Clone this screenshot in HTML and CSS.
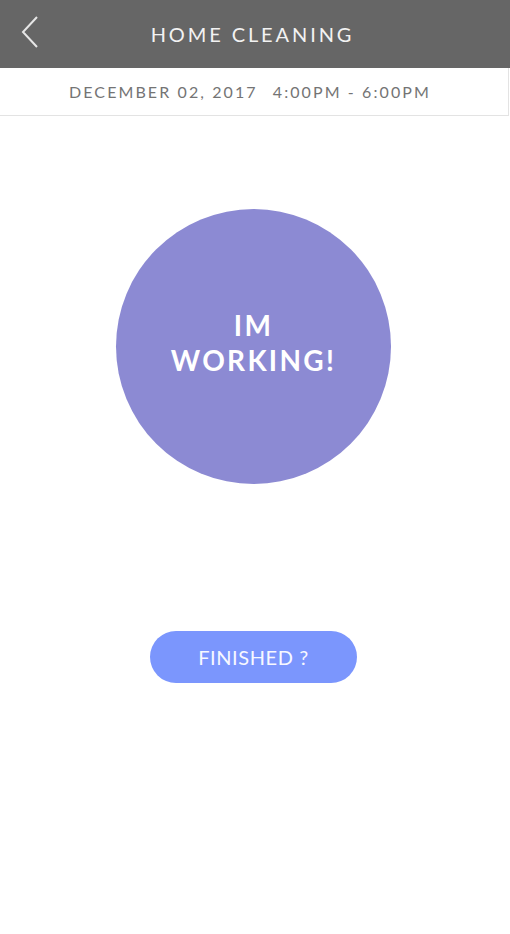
FILE: index.html
```html
<!DOCTYPE html>
<html>
<head>
<meta charset="utf-8">
<link rel="stylesheet" href="styles.css">
</head>
<body>
<div class="app">
  <header class="topbar">
    <svg class="back" width="18" height="32" viewBox="0 0 18 32"><path d="M16 1 L2 16 L16 31" fill="none" stroke="#e6e6e6" stroke-width="2"/></svg>
    <h1 class="title">HOME CLEANING</h1>
  </header>
  <div class="datebar">
    <span class="date">DECEMBER 02, 2017</span>
    <span class="time">4:00PM - 6:00PM</span>
  </div>
  <main class="content">
    <div class="status">IM<br>WORKING!</div>
    <button class="finish">FINISHED ?</button>
  </main>
</div>
</body>
</html>
```
FILE: styles.css
```css
html, body {
  margin: 0;
  padding: 0;
  background: #fff;
}
.app {
  width: 510px;
  font-family: Lato, "Open Sans", sans-serif;
}
.topbar {
  height: 68px;
  background: #666666;
  display: flex;
  align-items: center;
  justify-content: center;
  position: relative;
  padding-right: 5px;
}
.back {
  position: absolute;
  left: 21px;
  top: 16px;
}
.title {
  margin: 0;
  color: #f2f2f2;
  font-weight: 400;
  font-size: 20px;
  letter-spacing: 2.9px;
}
.datebar {
  height: 47px;
  border-bottom: 1px solid #e3e3e3;
  border-right: 1px solid #e3e3e3;
  margin-right: 1px;
  display: flex;
  align-items: center;
  justify-content: center;
  gap: 15px;
  padding-right: 8px;
  color: #747474;
  font-size: 16px;
  letter-spacing: 2.1px;
}
.content {
  display: flex;
  flex-direction: column;
  align-items: center;
  padding-right: 3px;
}
.status {
  margin-top: 93px;
  width: 275px;
  height: 275px;
  border-radius: 50%;
  background: #8c8ad3;
  color: #fff;
  display: flex;
  align-items: center;
  justify-content: center;
  text-align: center;
  font-weight: 700;
  font-size: 28px;
  line-height: 35px;
  letter-spacing: 2.3px;
  padding-bottom: 8px;
  box-sizing: border-box;
}
.finish {
  margin-top: 147px;
  width: 207px;
  height: 52px;
  border: none;
  border-radius: 26px;
  background: #7b96fd;
  color: #f7f8ff;
  font-family: Lato, "Open Sans", sans-serif;
  font-weight: 400;
  font-size: 20px;
  letter-spacing: 0.6px;
  padding: 0;
}
```
